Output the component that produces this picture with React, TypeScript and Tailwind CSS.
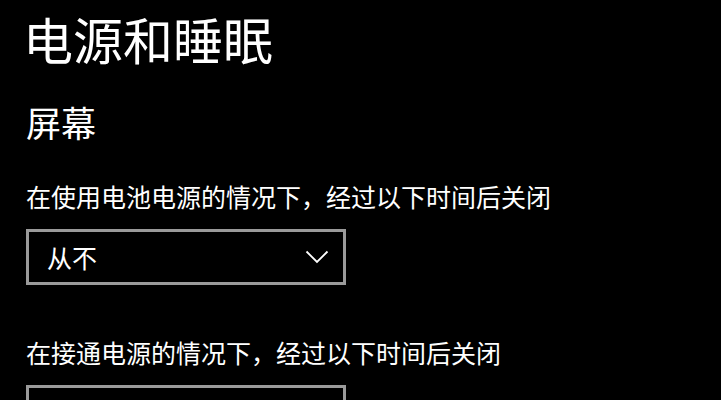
const font = { fontFamily: '"Noto Sans CJK SC", "Noto Sans", sans-serif' };

function Select({ value }: { value: string }) {
  return (
    <div className="flex h-[56px] w-[320px] items-center justify-between border-[3px] border-[#9a9a9a] pl-[18px] pr-[14px]">
      <span className="text-[25px] leading-none text-white">{value}</span>
      <svg width="24" height="14" viewBox="0 0 24 14" fill="none" className="text-white">
        <path d="M1.5 1.5 L12 12 L22.5 1.5" stroke="currentColor" strokeWidth="1.8" />
      </svg>
    </div>
  );
}

export default function App() {
  return (
    <div className="h-[400px] w-[721px] overflow-hidden bg-black pl-[26px] text-white" style={font}>
      <h1 className="-ml-[3px] pt-[13px] text-[50px] font-normal leading-none">电源和睡眠</h1>
      <h2 className="mt-[41px] text-[35px] font-normal leading-none">屏幕</h2>
      <p className="mt-[45px] text-[25px] leading-none">在使用电池电源的情况下，经过以下时间后关闭</p>
      <div className="mt-[20px]">
        <Select value="从不" />
      </div>
      <p className="mt-[55px] text-[25px] leading-none">在接通电源的情况下，经过以下时间后关闭</p>
      <div className="mt-[20px]">
        <Select value="从不" />
      </div>
    </div>
  );
}
